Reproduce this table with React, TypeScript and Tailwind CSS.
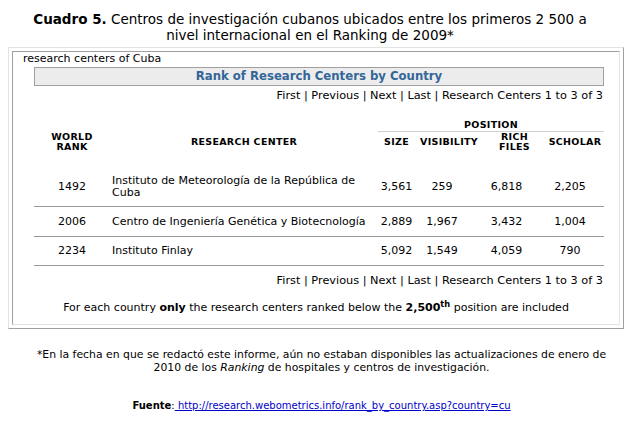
import React from "react"

const rows = [
  { rank: "1492", name: "Instituto de Meteorología de la República de Cuba", size: "3,561", vis: "259", rich: "6,818", sch: "2,205", h: "h-[55px] pt-[16px]" },
  { rank: "2006", name: "Centro de Ingeniería Genética y Biotecnología", size: "2,889", vis: "1,967", rich: "3,432", sch: "1,004", h: "h-[30px]" },
  { rank: "2234", name: "Instituto Finlay", size: "5,092", vis: "1,549", rich: "4,059", sch: "790", h: "h-[29px]" },
]

function Pager() {
  return (
    <div className="text-right text-[11.3px] leading-[13px] pr-[1px]">
      First | Previous | Next | Last | Research Centers 1 to 3 of 3
    </div>
  )
}

export default function App() {
  return (
    <div className="w-[643px] h-[426px] bg-white text-black font-['DejaVu_Sans',Verdana,sans-serif]">
      <div className="w-[620px] pt-[11px] text-center text-[13.5px] leading-[16px]">
        <span className="font-bold">Cuadro 5.</span> Centros de investigación cubanos ubicados entre los primeros 2 500 a
        <br />
        nivel internacional en el Ranking de 2009*
      </div>

      <div className="ml-[8px] mt-[4px] w-[616px] border border-t-[#e3e3e3] border-l-[#e3e3e3] border-b-[#a0a0a0] border-r-[#a0a0a0] p-[3px]">
        <div className="border border-t-[#a0a0a0] border-l-[#a0a0a0] border-b-[#e3e3e3] border-r-[#e3e3e3] pb-[10px]">
          <div className="pl-[10px] text-[11px] leading-[13px]">research centers of Cuba</div>

          <div className="ml-[21px] w-[570px]">
            <div className="mt-[2px] h-[19px] flex items-center justify-center border border-[#a0a0a0] bg-[#ececec] text-[11.7px] font-bold text-[#336699]">
              Rank of Research Centers by Country
            </div>
            <div className="mt-[3px]">
              <Pager />
            </div>

            <div className="mt-[17px] flex text-[9.5px] font-bold tracking-[0.3px] leading-[10px]">
              <div className="w-[76px] pt-[13px] h-[33px] flex flex-col items-center justify-center">
                <span>WORLD</span>
                <span>RANK</span>
              </div>
              <div className="w-[268px] pt-[13px] h-[33px] flex items-center justify-center">RESEARCH CENTER</div>
              <div className="w-[226px]">
                <div className="h-[13px] border-b border-[#d0d0d0] text-center leading-[12px]">POSITION</div>
                <div className="h-[20px] flex items-center">
                  <div className="w-[37px] text-center">SIZE</div>
                  <div className="w-[68px] text-center">VISIBILITY</div>
                  <div className="w-[63px] flex flex-col items-center">
                    <span>RICH</span>
                    <span>FILES</span>
                  </div>
                  <div className="w-[58px] text-center">SCHOLAR</div>
                </div>
              </div>
            </div>

            {rows.map((r) => (
              <div key={r.rank} className={`${r.h} flex items-center border-b border-[#999] text-[11px] leading-[12px]`}>
                <div className="w-[76px] text-center">{r.rank}</div>
                <div className="w-[268px] pl-[2px] pr-[6px]">{r.name}</div>
                <div className="w-[37px] text-center">{r.size}</div>
                <div className="w-[68px] text-center pr-[14px]">{r.vis}</div>
                <div className="w-[63px] text-center pr-[16px]">{r.rich}</div>
                <div className="w-[58px] text-center pr-[10px]">{r.sch}</div>
              </div>
            ))}

            <div className="mt-[8px]">
              <Pager />
            </div>
          </div>

          <div className="mt-[14px] text-center text-[11px] leading-[13px]">
            For each country <span className="font-bold">only</span> the research centers ranked below the{" "}
            <span className="font-bold">
              2,500<sup>th</sup>
            </span>{" "}
            position are included
          </div>
        </div>
      </div>

      <div className="mt-[19px] text-center text-[10.85px] leading-[13px] whitespace-nowrap">
        *En la fecha en que se redactó este informe, aún no estaban disponibles las actualizaciones de enero de
        <br />
        2010 de los <i>Ranking</i> de hospitales y centros de investigación.
      </div>

      <div className="mt-[26px] text-center text-[10px] leading-[12px] whitespace-nowrap">
        <span className="font-bold">Fuente</span>:
        <a className="text-[#0000cc] underline"> http://research.webometrics.info/rank_by_country.asp?country=cu</a>
      </div>
    </div>
  )
}
